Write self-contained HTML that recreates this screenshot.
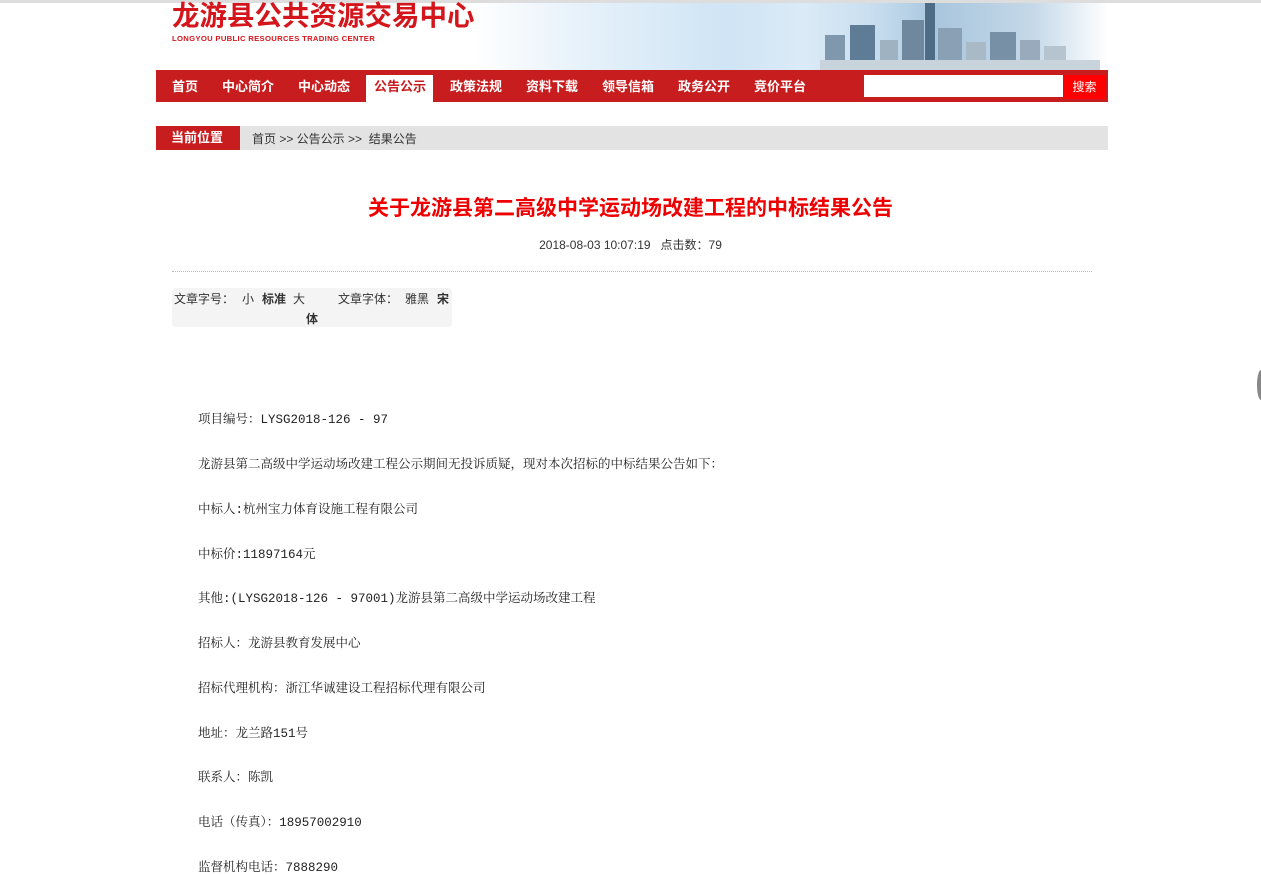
<!DOCTYPE html>
<html><head><meta charset="utf-8"><style>
body{margin:0;background:#fff;font-family:"Liberation Sans","Noto Sans CJK SC",sans-serif;width:1261px;height:872px;overflow:hidden;position:relative}
.a{position:absolute}
.nav span{position:absolute;top:76px;color:#fff;font-weight:bold;font-size:13px}
.c{position:absolute;left:198px;font-family:"Liberation Mono","Noto Serif CJK SC",monospace;font-size:12.5px;color:#222}
.b{position:absolute;bottom:0}
</style></head><body>
<div class="a" style="left:0;top:0;width:1261px;height:3px;background:#ddd"></div>
<div class="a" style="left:156px;top:3px;width:952px;height:67px;background:linear-gradient(90deg,#fff 0%,#fff 33%,#e6f1fa 45%,#cfe4f5 60%,#dbeaf6 68%,#c9dff0 75%,#a9c6de 82%,#c4d8e8 92%,#fff 100%)"></div>
<div class="a" style="left:820px;top:3px;width:280px;height:67px;overflow:hidden">
<div class="b" style="left:5px;width:20px;height:35px;background:#7f98ae"></div>
<div class="b" style="left:30px;width:25px;height:45px;background:#5f7c96"></div>
<div class="b" style="left:60px;width:18px;height:30px;background:#9fb2c2"></div>
<div class="b" style="left:82px;width:22px;height:50px;background:#6f889e"></div>
<div class="b" style="left:105px;width:10px;height:67px;background:#4f6c86"></div>
<div class="b" style="left:118px;width:24px;height:42px;background:#8aa0b4"></div>
<div class="b" style="left:146px;width:20px;height:28px;background:#a9b9c6"></div>
<div class="b" style="left:170px;width:26px;height:38px;background:#7890a6"></div>
<div class="b" style="left:200px;width:20px;height:30px;background:#98aabb"></div>
<div class="b" style="left:224px;width:22px;height:24px;background:#b6c4d0"></div>
<div class="b" style="left:0;width:280px;height:10px;background:#c9d3dc"></div>
</div>
<div class="a" style="left:172px;top:0px;font-size:27.5px;font-weight:bold;color:#d4161c;line-height:32px">龙游县公共资源交易中心</div>
<div class="a" style="left:172px;top:34px;font-size:7.7px;font-weight:bold;color:#d4161c;letter-spacing:.3px">LONGYOU PUBLIC RESOURCES TRADING CENTER</div>
<div class="a" style="left:156px;top:70px;width:952px;height:32px;background:#c81d1f"></div>
<div class="a" style="left:366px;top:75px;width:67px;height:27px;background:#fff"></div>
<div class="nav">
<span style="left:172px">首页</span><span style="left:222px">中心简介</span><span style="left:298px">中心动态</span><span style="left:374px;top:76px;color:#c81d1f">公告公示</span><span style="left:450px">政策法规</span><span style="left:526px">资料下载</span><span style="left:602px">领导信箱</span><span style="left:678px">政务公开</span><span style="left:754px">竞价平台</span>
</div>
<div class="a" style="left:864px;top:75px;width:199px;height:22px;background:#fff"></div>
<div class="a" style="left:1063px;top:75px;width:43px;height:24px;background:#f00;color:#fff;font-size:12px;text-align:center;line-height:24px">搜索</div>
<div class="a" style="left:156px;top:126px;width:952px;height:24px;background:#e3e3e3"></div>
<div class="a" style="left:156px;top:126px;width:84px;height:24px;background:#c81d1f;color:#fff;font-weight:bold;font-size:13px;line-height:24px;text-indent:15px">当前位置</div>
<div class="a" style="left:252px;top:130px;font-size:12px;color:#333">首页 &gt;&gt; 公告公示 &gt;&gt;&nbsp; 结果公告</div>
<div class="a" style="left:0;width:1261px;top:192px;text-align:center;font-size:21px;font-weight:bold;color:#e00">关于龙游县第二高级中学运动场改建工程的中标结果公告</div>
<div class="a" style="left:0;width:1261px;top:236px;text-align:center;font-size:12px;color:#333">2018-08-03 10:07:19 &nbsp; 点击数：79</div>
<div class="a" style="left:172px;top:271px;width:920px;border-top:1px dotted #bbb"></div>
<div class="a" style="left:172px;top:288px;width:280px;height:39px;background:#f4f4f4;border-radius:4px;font-size:12px;color:#333">
<span class="a" style="left:2px;top:2px">文章字号：</span><span class="a" style="left:70px;top:2px">小</span><span class="a" style="left:90px;top:2px;font-weight:bold">标准</span><span class="a" style="left:121px;top:2px">大</span><span class="a" style="left:166px;top:2px">文章字体：</span><span class="a" style="left:233px;top:2px">雅黑</span><span class="a" style="left:265px;top:2px;font-weight:bold">宋</span><span class="a" style="left:134px;top:22px;font-weight:bold">体</span></div>
<div class="c" style="top:409px">项目编号：LYSG2018-126 - 97</div>
<div class="c" style="top:454px">龙游县第二高级中学运动场改建工程公示期间无投诉质疑，现对本次招标的中标结果公告如下：</div>
<div class="c" style="top:499px">中标人:杭州宝力体育设施工程有限公司</div>
<div class="c" style="top:544px">中标价:11897164元</div>
<div class="c" style="top:588px">其他:(LYSG2018-126 - 97001)龙游县第二高级中学运动场改建工程</div>
<div class="c" style="top:633px">招标人：龙游县教育发展中心</div>
<div class="c" style="top:678px">招标代理机构：浙江华诚建设工程招标代理有限公司</div>
<div class="c" style="top:723px">地址：龙兰路151号</div>
<div class="c" style="top:767px">联系人：陈凯</div>
<div class="c" style="top:812px">电话（传真）：18957002910</div>
<div class="c" style="top:857px">监督机构电话：7888290</div>
<div class="a" style="left:1257px;top:370px;width:8px;height:30px;border-radius:50%;background:#888"></div>
</body></html>
